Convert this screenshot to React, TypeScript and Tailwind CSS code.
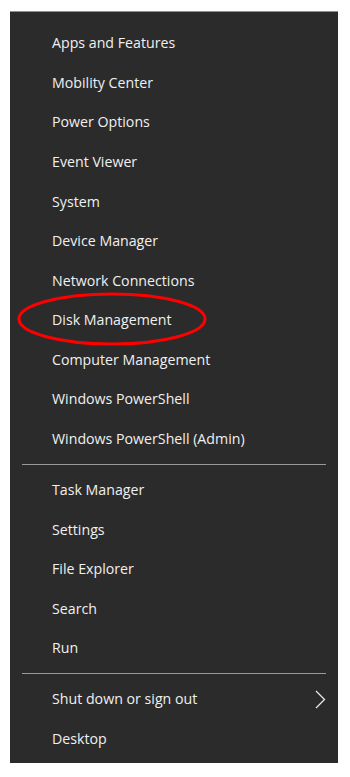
import React from 'react';

const groups = [
  [
    'Apps and Features',
    'Mobility Center',
    'Power Options',
    'Event Viewer',
    'System',
    'Device Manager',
    'Network Connections',
    'Disk Management',
    'Computer Management',
    'Windows PowerShell',
    'Windows PowerShell (Admin)',
  ],
  ['Task Manager', 'Settings', 'File Explorer', 'Search', 'Run'],
  ['Shut down or sign out', 'Desktop'],
];

const Chevron = () => (
  <svg width="11" height="19" viewBox="0 0 11 19" fill="none" className="mr-[12px]">
    <path d="M1 1 L9.5 9.5 L1 18" stroke="#e8e8e8" strokeWidth="1.3" />
  </svg>
);

const App = () => {
  return (
    <div className="w-[350px] h-[777px] bg-white pt-[11px] pl-[10px]">
      <div className="relative w-[328px] h-[752px] bg-[#2b2b2b] border-t border-[#8f8f8f] pt-[11px] font-['Segoe_UI','Open_Sans',sans-serif] text-[14.2px] text-[#f0f0f0]">
        {groups.map((items, gi) => (
          <div key={gi}>
            {gi > 0 && (
              <div className="h-[11.4px] flex items-center">
                <div className="ml-[12px] w-[304px] h-px bg-[#9a9a9a]" />
              </div>
            )}
            {items.map((label) => (
              <div key={label} className="h-[39.6px] flex items-center justify-between pl-[42px]">
                <span>{label}</span>
                {label === 'Shut down or sign out' && <Chevron />}
              </div>
            ))}
          </div>
        ))}

        <svg className="absolute left-[6px] top-[280px]" width="192" height="54" viewBox="0 0 192 54">
          <ellipse cx="96" cy="27" rx="93" ry="25" fill="none" stroke="#ff0000" strokeWidth="3" />
        </svg>
      </div>
    </div>
  );
};

export default App;
